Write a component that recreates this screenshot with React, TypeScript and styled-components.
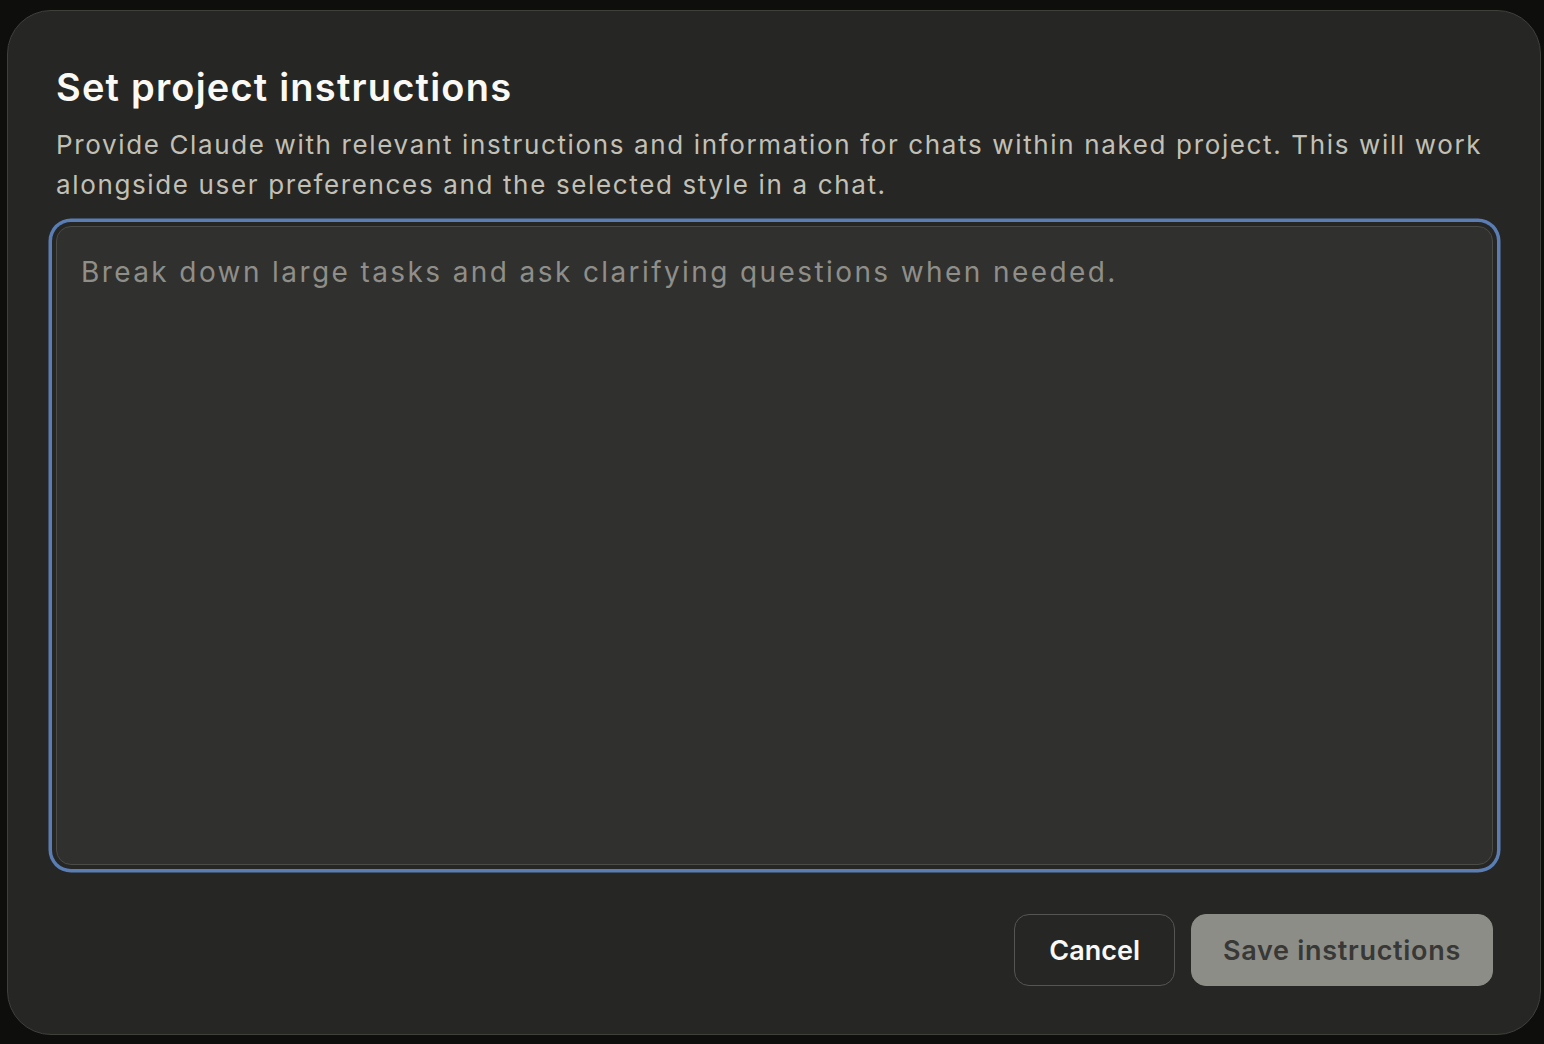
import React from "react";
import styled, { createGlobalStyle } from "styled-components";

const Global = createGlobalStyle`
  html, body { margin: 0; padding: 0; background: #0e0e0d; }
  body { font-family: Inter, "Noto Sans", sans-serif; -webkit-font-smoothing: antialiased; }
  * { box-sizing: border-box; }
`;

const Screen = styled.div`
  width: 1544px;
  height: 1044px;
  padding: 10px 3px 9px 7px;
  display: flex;
`;

const Dialog = styled.div`
  flex: 1;
  background: #262624;
  border: 1px solid #3f3f3c;
  border-radius: 44px;
  padding: 48px 47px 47px 48px;
  display: flex;
  flex-direction: column;
`;

const Title = styled.h2`
  margin: 0;
  font-family: Inter, sans-serif;
  font-weight: 600;
  font-size: 38px;
  line-height: 56px;
  color: #faf9f5;
  letter-spacing: 1.2px;
`;

const Description = styled.p`
  margin: 10px 0 0 0;
  font-family: Inter, sans-serif;
  font-size: 26px;
  line-height: 40px;
  color: #c2c0b6;
  letter-spacing: 1.64px;
`;

const Field = styled.textarea`
  margin-top: 21px;
  height: 639px;
  resize: none;
  background: #30302e;
  border: 1.5px solid #4b4b48;
  border-radius: 15px;
  box-shadow: 0 0 0 4px #262624, 0 0 0 7.5px #5a7eb3;
  outline: none;
  padding: 23px 24px;
  font-family: Inter, sans-serif;
  font-size: 28px;
  line-height: 44px;
  letter-spacing: 2.4px;
  color: #faf9f5;
  caret-color: #ffffff;
  &::placeholder { color: #8f8e89; }
`;

const Footer = styled.div`
  margin-top: 49px;
  display: flex;
  justify-content: flex-end;
  gap: 16px;
`;

const Button = styled.button<{ $primary?: boolean }>`
  height: 72px;
  padding: 0 ${p => (p.$primary ? 31 : 34)}px;
  border-radius: 15px;
  font-family: Inter, sans-serif;
  font-weight: 600;
  font-size: 27px;
  letter-spacing: ${p => (p.$primary ? 0.7 : 0)}px;
  cursor: pointer;
  border: 1px solid ${p => (p.$primary ? "#8d8d88" : "#555552")};
  background: ${p => (p.$primary ? "#8d8d88" : "transparent")};
  color: ${p => (p.$primary ? "#383836" : "#faf9f5")};
`;

export default function App() {
  return (
    <>
      <Global />
      <Screen>
        <Dialog>
          <Title>Set project instructions</Title>
          <Description>
            Provide Claude with relevant instructions and information for chats within naked project. This will work
            alongside user preferences and the selected style in a chat.
          </Description>
          <Field autoFocus placeholder="Break down large tasks and ask clarifying questions when needed." />
          <Footer>
            <Button>Cancel</Button>
            <Button $primary>Save instructions</Button>
          </Footer>
        </Dialog>
      </Screen>
    </>
  );
}
